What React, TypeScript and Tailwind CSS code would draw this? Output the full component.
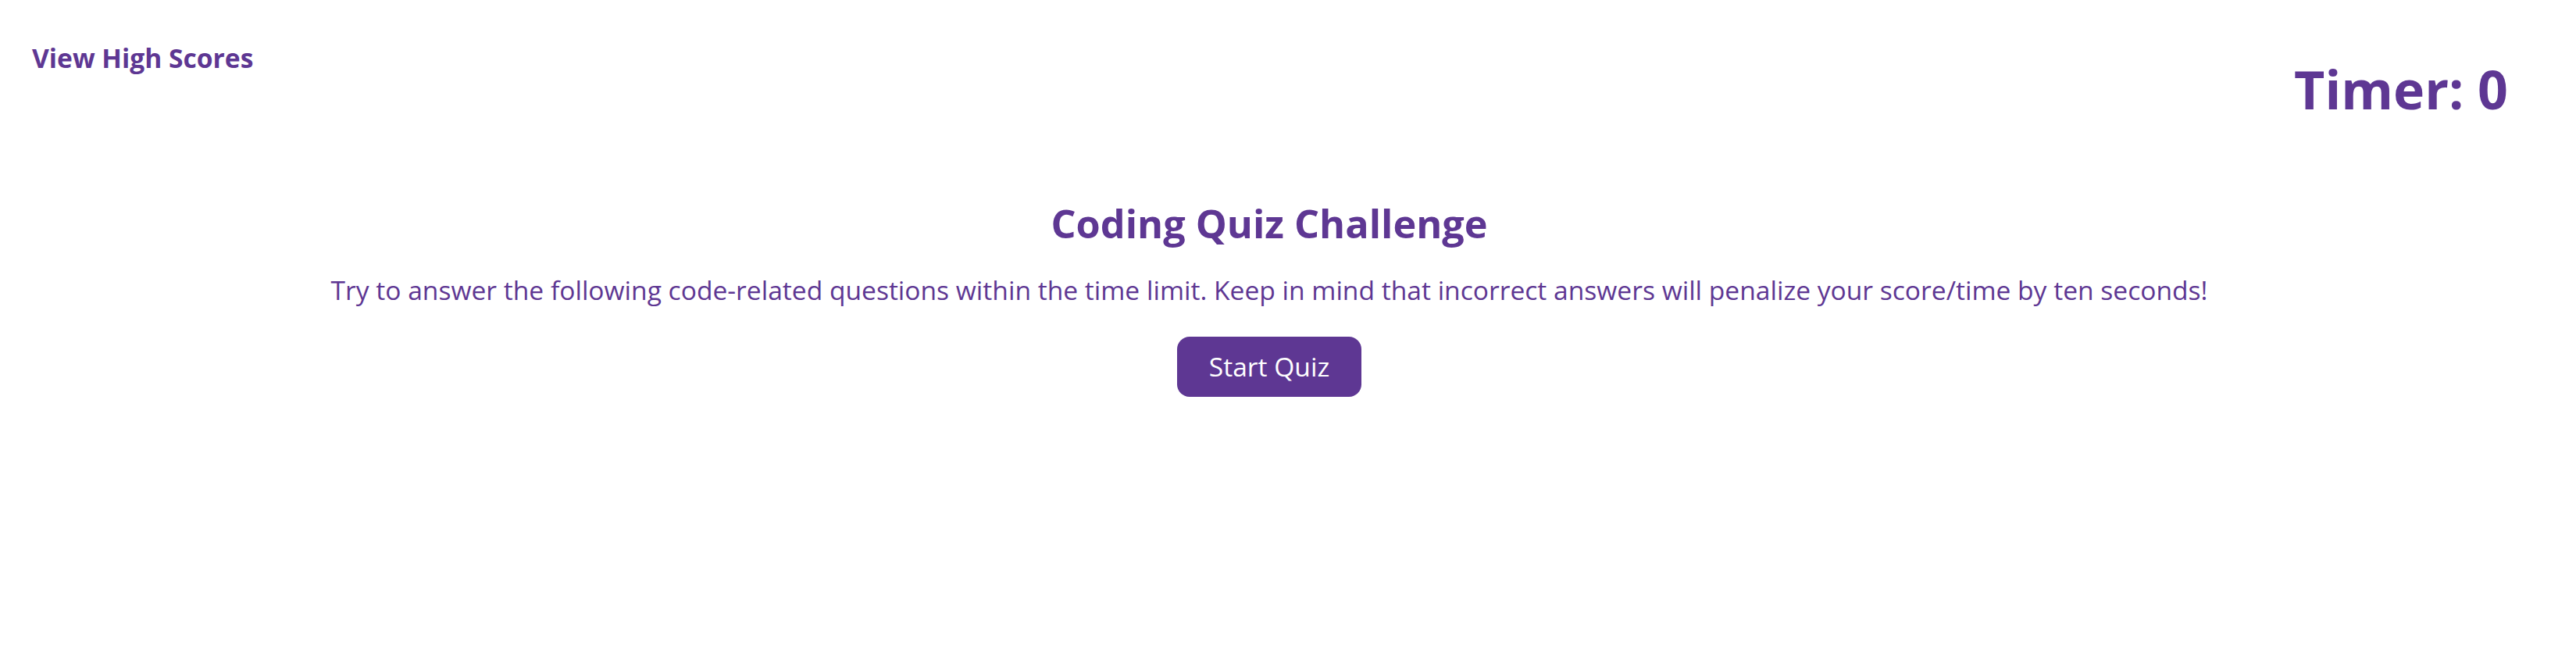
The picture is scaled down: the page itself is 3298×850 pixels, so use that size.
import React from "react";

export default function App() {
  return (
    <div
      className="min-h-screen w-full bg-white text-[#5e3793]"
      style={{ fontFamily: '"Open Sans", "Noto Sans", sans-serif' }}
    >
      <header className="flex items-start justify-between">
        <a href="#" className="ml-[41px] mt-[49px] text-[33.6px] font-bold leading-normal">
          View High Scores
        </a>
        <div className="mr-[87px] mt-[63px] text-[68px] font-bold leading-normal">Timer: 0</div>
      </header>
      <main className="flex flex-col items-center pr-[48px]">
        <h1 className="mt-[83px] text-[50.4px] font-bold leading-normal">Coding Quiz Challenge</h1>
        <p className="mt-[22px] text-[33.6px] leading-normal">
          Try to answer the following code-related questions within the time limit. Keep in mind that
          incorrect answers will penalize your score/time by ten seconds!
        </p>
        <button className="mt-[35px] rounded-[16px] bg-[#5e3793] px-[41px] pb-[14px] pt-[13px] text-[33.6px] leading-normal text-white">
          Start Quiz
        </button>
      </main>
    </div>
  );
}
